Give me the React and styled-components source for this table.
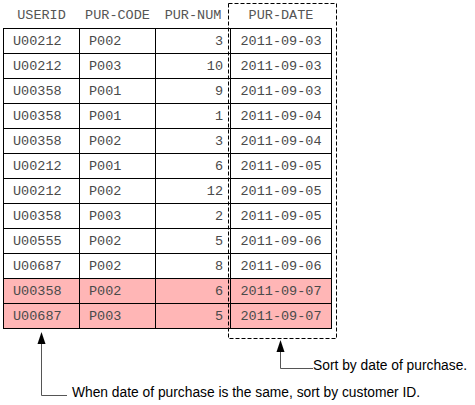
import styled, { createGlobalStyle } from "styled-components";

const Global = createGlobalStyle`
  html, body { margin: 0; padding: 0; background: #fff; }
`;

const Canvas = styled.div`
  position: relative;
  width: 475px;
  height: 405px;
  padding: 3px 0 0 3px;
  box-sizing: border-box;
  overflow: hidden;
`;

const Table = styled.table`
  border-collapse: collapse;
  table-layout: fixed;
  font-family: "Liberation Mono", "Courier New", monospace;
  font-size: 13.5px;
  color: #4a4a4a;
`;

const Head = styled.th`
  height: 25px;
  padding: 0;
  font-weight: normal;
  text-align: center;
  vertical-align: middle;
  color: #555;
`;

const Cell = styled.td`
  height: 24px;
  padding: 0 ${p => (p.$align === "right" ? "7px" : "0")} 0 ${p => (p.$align === "left" ? "9px" : "0")};
  border: 1px solid #000;
  text-align: ${p => p.$align};
  vertical-align: middle;
  background: ${p => (p.$hl ? "#ffb6b6" : "#fff")};
  white-space: nowrap;
`;

const Notes = styled.div`
  display: flex;
  flex-direction: column;
  gap: 11px;
  margin-top: 29px;
  font-family: "Liberation Sans", Arial, sans-serif;
  font-size: 13.8px;
  line-height: 16px;
  color: #000;
`;

const Note = styled.div`
  padding-left: ${p => p.$indent}px;
  white-space: nowrap;
`;

const Overlay = styled.svg`
  position: absolute;
  left: 0;
  top: 0;
  pointer-events: none;
`;

const rows = [
  ["U00212", "P002", 3, "2011-09-03"],
  ["U00212", "P003", 10, "2011-09-03"],
  ["U00358", "P001", 9, "2011-09-03"],
  ["U00358", "P001", 1, "2011-09-04"],
  ["U00358", "P002", 3, "2011-09-04"],
  ["U00212", "P001", 6, "2011-09-05"],
  ["U00212", "P002", 12, "2011-09-05"],
  ["U00358", "P003", 2, "2011-09-05"],
  ["U00555", "P002", 5, "2011-09-06"],
  ["U00687", "P002", 8, "2011-09-06"],
  ["U00358", "P002", 6, "2011-09-07", true],
  ["U00687", "P003", 5, "2011-09-07", true],
];

export default function App() {
  return (
    <Canvas>
      <Global />
      <Table>
        <colgroup>
          <col style={{ width: 76 }} />
          <col style={{ width: 76 }} />
          <col style={{ width: 75 }} />
          <col style={{ width: 101 }} />
        </colgroup>
        <thead>
          <tr>
            <Head>USERID</Head>
            <Head>PUR-CODE</Head>
            <Head>PUR-NUM</Head>
            <Head>PUR-DATE</Head>
          </tr>
        </thead>
        <tbody>
          {rows.map(([id, code, num, date, hl], i) => (
            <tr key={i}>
              <Cell $align="left" $hl={hl}>{id}</Cell>
              <Cell $align="left" $hl={hl}>{code}</Cell>
              <Cell $align="right" $hl={hl}>{num}</Cell>
              <Cell $align="center" $hl={hl}>{date}</Cell>
            </tr>
          ))}
        </tbody>
      </Table>
      <Notes>
        <Note $indent={310}>Sort by date of purchase.</Note>
        <Note $indent={69}>When date of purchase is the same, sort by customer ID.</Note>
      </Notes>
      <Overlay width="475" height="405">
        <rect x="228.5" y="3.5" width="108" height="335" fill="none" stroke="#000" strokeWidth="1" strokeDasharray="4 2" />
        <polyline points="280.5,350 280.5,368.5 313,368.5" fill="none" stroke="#555" strokeWidth="1" />
        <polygon points="280.5,340 276.5,352 284.5,352" fill="#000" />
        <polyline points="41.5,343 41.5,395.5 67,395.5" fill="none" stroke="#555" strokeWidth="1" />
        <polygon points="41.5,332 37.5,344 45.5,344" fill="#000" />
      </Overlay>
    </Canvas>
  );
}
